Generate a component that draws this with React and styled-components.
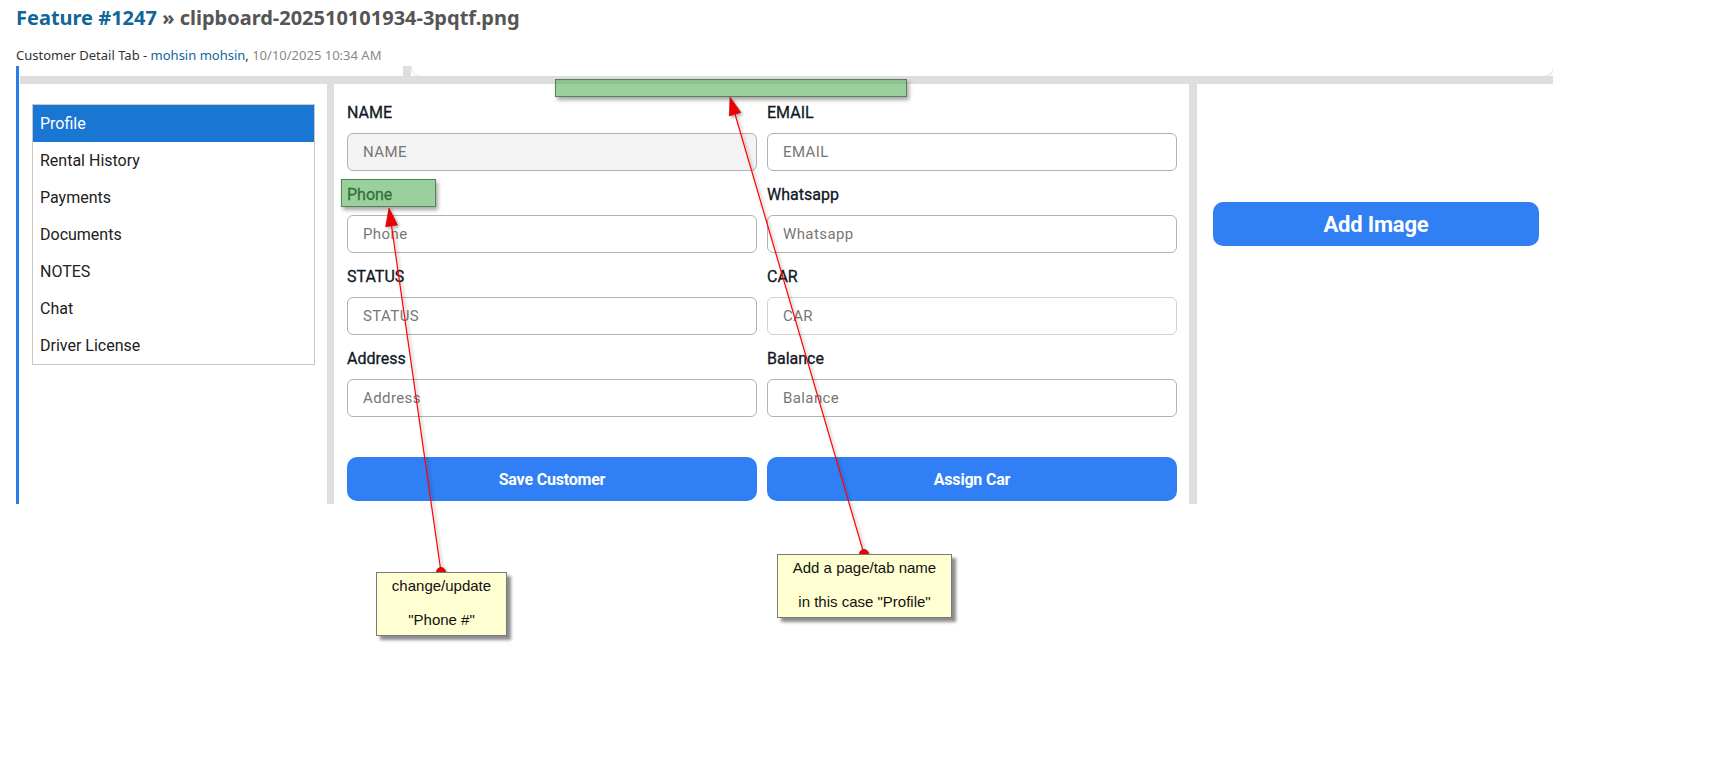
import React from 'react'
import styled, { createGlobalStyle } from 'styled-components'

const GlobalStyle = createGlobalStyle`
  body {
    margin: 0;
    background: #fff;
    font-family: "Noto Sans", "Open Sans", sans-serif;
  }
`

const Page = styled.div`
  position: relative;
  width: 1721px;
  height: 768px;
  padding-left: 16px;
  box-sizing: border-box;
  overflow: hidden;
`

const Title = styled.h2`
  margin: 0;
  padding-top: 5px;
  font-size: 20px;
  line-height: 26px;
  font-weight: 700;
  color: #555;
`

const TitleLink = styled.a`
  color: #116699;
  text-decoration: none;
`

const Meta = styled.p`
  margin: 16px 0 0;
  font-size: 13px;
  line-height: 17px;
  color: #333;
`

const AuthorLink = styled.a`
  color: #116699;
  text-decoration: none;
`

const Stamp = styled.span`
  color: #888;
`

const Shot = styled.div`
  margin-top: 2px;
  width: 1537px;
  border-left: 3px solid #2b7de9;
  box-sizing: border-box;
  display: flex;
  flex-direction: column;
`

const TopGap = styled.div`
  position: relative;
  height: 10px;
`

const Notch = styled.span`
  position: absolute;
  left: 384px;
  top: 0;
  width: 8px;
  height: 10px;
  background: #dedede;
  &::after {
    content: '';
    position: absolute;
    left: 8px;
    top: 0;
    width: 8px;
    height: 9px;
    border-left: 1px solid #e8e8e8;
    border-bottom: 1px solid #e8e8e8;
    border-bottom-left-radius: 8px;
  }
`

const Corner = styled.span`
  position: absolute;
  right: 0;
  top: 3px;
  width: 6px;
  height: 6px;
  border-right: 1px solid #e4e4e4;
  border-bottom: 1px solid #e4e4e4;
  border-bottom-right-radius: 6px;
`

const Strip = styled.div`
  height: 8px;
  margin-left: 1px;
  background: #dedede;
`

const Panels = styled.div`
  display: grid;
  grid-template-columns: 308px 7px 855px 8px 1fr;
  height: 420px;
  font-family: Roboto, "Noto Sans", sans-serif;
`

const Divider = styled.div`
  background: #dedede;
`

const Sidebar = styled.div`
  padding: 20px 0 0 13px;
`

const TabList = styled.ul`
  list-style: none;
  margin: 0;
  padding: 0;
  width: 283px;
  border: 1px solid #c8c8c8;
  box-sizing: border-box;
`

const Tab = styled.li`
  height: 37px;
  padding-left: 7px;
  display: flex;
  align-items: center;
  font-size: 16px;
  color: ${p => (p.$active ? '#fff' : '#212121')};
  background: ${p => (p.$active ? '#1976d2' : 'transparent')};
`

const FormPanel = styled.div`
  padding: 17px 12px 0 13px;
`

const FieldGrid = styled.div`
  display: grid;
  grid-template-columns: 1fr 1fr;
  column-gap: 10px;
  row-gap: 12px;
`

const Field = styled.div`
  display: flex;
  flex-direction: column;
  gap: 8px;
`

const Label = styled.label`
  height: 24px;
  line-height: 24px;
  font-size: 16px;
  font-weight: 400;
  -webkit-text-stroke: 0.3px #111827;
  color: #111827;
`

const Input = styled.input`
  height: 38px;
  box-sizing: border-box;
  padding: 0 15px;
  border: 1px solid ${p => (p.$soft ? '#d2d2d2' : '#b2b2b2')};
  border-radius: 6px;
  background: ${p => (p.$disabled ? '#f3f3f3' : '#fff')};
  font-family: Roboto, sans-serif;
  font-size: 15px;
  letter-spacing: 0.4px;
  outline: none;
  &::placeholder {
    color: #777;
  }
`

const ButtonRow = styled.div`
  display: grid;
  grid-template-columns: 1fr 1fr;
  column-gap: 10px;
  margin-top: 40px;
`

const BlueButton = styled.button`
  height: 44px;
  border: none;
  border-radius: 10px;
  background: #307ff4;
  color: #fff;
  font-family: Roboto, sans-serif;
  font-weight: 700;
  font-size: ${p => (p.$big ? 22 : 16)}px;
  letter-spacing: -0.2px;
  cursor: pointer;
`

const ImagePanel = styled.div`
  padding: 118px 14px 0 16px;
  display: flex;
  flex-direction: column;
`

const Highlight = styled.div`
  position: absolute;
  left: ${p => p.$x}px;
  top: ${p => p.$y}px;
  width: ${p => p.$w}px;
  height: ${p => p.$h}px;
  box-sizing: border-box;
  background: rgba(76, 172, 80, 0.57);
  border: 1px solid rgba(70, 100, 70, 0.75);
  box-shadow: 2px 3px 4px rgba(0, 0, 0, 0.35);
`

const Note = styled.div`
  position: absolute;
  left: ${p => p.$x}px;
  top: ${p => p.$y}px;
  width: ${p => p.$w}px;
  height: 64px;
  box-sizing: border-box;
  overflow: hidden;
  background: #ffffd2;
  border: 1px solid #7a7a7a;
  box-shadow: 4px 4px 3px rgba(0, 0, 0, 0.45);
  font-family: "Liberation Sans", Arial, sans-serif;
  font-size: 15px;
  color: #111;
  text-align: center;
`

const NoteLine = styled.div`
  height: 34px;
  line-height: 34px;
  &:first-child {
    margin-top: -4px;
  }
`

const Overlay = styled.svg`
  position: absolute;
  left: 0;
  top: 0;
  pointer-events: none;
`

const fields = [
  ['NAME', 'NAME', { $disabled: true }],
  ['EMAIL', 'EMAIL'],
  ['Phone', 'Phone'],
  ['Whatsapp', 'Whatsapp'],
  ['STATUS', 'STATUS'],
  ['CAR', 'CAR', { $soft: true }],
  ['Address', 'Address'],
  ['Balance', 'Balance'],
]

const tabs = ['Profile', 'Rental History', 'Payments', 'Documents', 'NOTES', 'Chat', 'Driver License']

function Arrow({ x1, y1, x2, y2 }) {
  const dx = x2 - x1
  const dy = y2 - y1
  const len = Math.hypot(dx, dy)
  const ux = dx / len
  const uy = dy / len
  const bx = x2 - ux * 18
  const by = y2 - uy * 18
  const px = -uy * 6
  const py = ux * 6
  return (
    <g filter="url(#shade)">
      <line x1={x1} y1={y1} x2={bx} y2={by} stroke="#ff0000" strokeWidth="1.2" />
      <polygon points={`${x2},${y2} ${bx + px},${by + py} ${bx - px},${by - py}`} fill="#ee0000" stroke="#b00000" strokeWidth="0.6" />
      <circle cx={x1} cy={y1} r="4.5" fill="#ee0000" stroke="#a00000" strokeWidth="0.8" />
    </g>
  )
}

export default function App() {
  return (
    <>
      <GlobalStyle />
      <Page>
        <Title>
          <TitleLink>Feature #1247</TitleLink> » clipboard-202510101934-3pqtf.png
        </Title>
        <Meta>
          Customer Detail Tab - <AuthorLink>mohsin mohsin</AuthorLink>, <Stamp>10/10/2025 10:34 AM</Stamp>
        </Meta>
        <Shot>
          <TopGap>
            <Notch />
            <Corner />
          </TopGap>
          <Strip />
          <Panels>
            <Sidebar>
              <TabList>
                {tabs.map((t, i) => (
                  <Tab key={t} $active={i === 0}>{t}</Tab>
                ))}
              </TabList>
            </Sidebar>
            <Divider />
            <FormPanel>
              <FieldGrid>
                {fields.map(([label, ph, extra]) => (
                  <Field key={label}>
                    <Label>{label}</Label>
                    <Input placeholder={ph} {...(extra || {})} />
                  </Field>
                ))}
              </FieldGrid>
              <ButtonRow>
                <BlueButton>Save Customer</BlueButton>
                <BlueButton>Assign Car</BlueButton>
              </ButtonRow>
            </FormPanel>
            <Divider />
            <ImagePanel>
              <BlueButton $big>Add Image</BlueButton>
            </ImagePanel>
          </Panels>
        </Shot>

        <Highlight $x={555} $y={79} $w={352} $h={18} />
        <Highlight $x={341} $y={179} $w={95} $h={28} />

        <Overlay width="1721" height="768" viewBox="0 0 1721 768">
          <defs>
            <filter id="shade" x="-20%" y="-5%" width="140%" height="110%">
              <feDropShadow dx="2" dy="2" stdDeviation="1.5" floodColor="#000" floodOpacity="0.3" />
            </filter>
          </defs>
          <Arrow x1={441} y1={572} x2={389} y2={208} />
          <Arrow x1={864} y1={554} x2={730} y2={97} />
        </Overlay>

        <Note $x={376} $y={572} $w={131}>
          <NoteLine>change/update</NoteLine>
          <NoteLine>"Phone #"</NoteLine>
        </Note>
        <Note $x={777} $y={554} $w={175}>
          <NoteLine>Add a page/tab name</NoteLine>
          <NoteLine>in this case "Profile"</NoteLine>
        </Note>
      </Page>
    </>
  )
}
